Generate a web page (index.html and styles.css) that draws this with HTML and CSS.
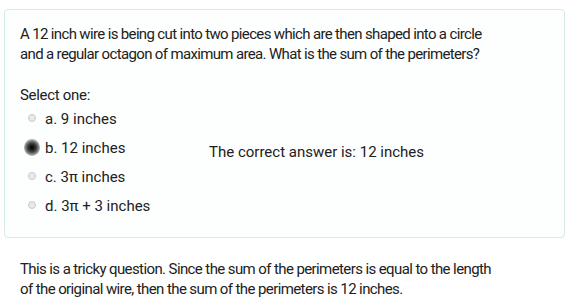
FILE: index.html
```html
<!DOCTYPE html>
<html>
<head>
<meta charset="utf-8">
<link rel="stylesheet" href="styles.css">
</head>
<body>
<div class="card">
  <p class="question">A 12 inch wire is being cut into two pieces which are then shaped into a circle and a regular octagon of maximum area. What is the sum of the perimeters?</p>
  <p class="prompt">Select one:</p>
  <div class="answer-area">
    <ul class="options">
      <li class="option"><span class="radio"></span><span>a. 9 inches</span></li>
      <li class="option"><span class="radio checked"></span><span>b. 12 inches</span></li>
      <li class="option"><span class="radio"></span><span>c. 3π inches</span></li>
      <li class="option"><span class="radio"></span><span>d. 3π + 3 inches</span></li>
    </ul>
    <div class="feedback">The correct answer is: 12 inches</div>
  </div>
</div>
<p class="explanation">This is a tricky question. Since the sum of the perimeters is equal to the length of the original wire, then the sum of the perimeters is 12 inches.</p>
</body>
</html>
```
FILE: styles.css
```css
html, body {
  margin: 0;
  padding: 0;
  background: #ffffff;
}
body {
  font-family: Roboto, "Liberation Sans", sans-serif;
  font-size: 15px;
  line-height: 20px;
  color: #212121;
}
.card {
  margin: 9px 10px 0 4px;
  border: 1px solid #d4ebe6;
  border-radius: 4px;
  background: #fdfffe;
  padding: 14px 15px 16px 15px;
}
.question {
  margin: 0;
  max-width: 478px;
  letter-spacing: -0.65px;
}
.prompt {
  margin: 21px 0 0 0;
  letter-spacing: -0.3px;
}
.answer-area {
  display: flex;
}
.options {
  list-style: none;
  margin: 0;
  padding: 0;
  width: 189px;
}
.option {
  display: flex;
  align-items: center;
  height: 29px;
  line-height: 29px;
}
.radio {
  width: 16px;
  height: 16px;
  margin-left: 4px;
  margin-right: 5px;
  margin-top: -3px;
  display: flex;
  align-items: center;
  justify-content: center;
  flex: none;
}
.radio::before {
  content: "";
  width: 6px;
  height: 6px;
  border-radius: 50%;
  background: #e9e9e9;
  border: 1px solid #c9c9c9;
}
.radio.checked::before {
  width: 17px;
  height: 17px;
  border: none;
  background: radial-gradient(circle, #000 0%, #1a1a1a 18%, rgba(0,0,0,0.7) 42%, rgba(0,0,0,0.3) 68%, rgba(0,0,0,0.05) 90%, rgba(0,0,0,0) 100%);
}
.feedback {
  padding-top: 37px;
}
.explanation {
  margin: 21px 0 0 20px;
  max-width: 478px;
  letter-spacing: -0.6px;
}
```
